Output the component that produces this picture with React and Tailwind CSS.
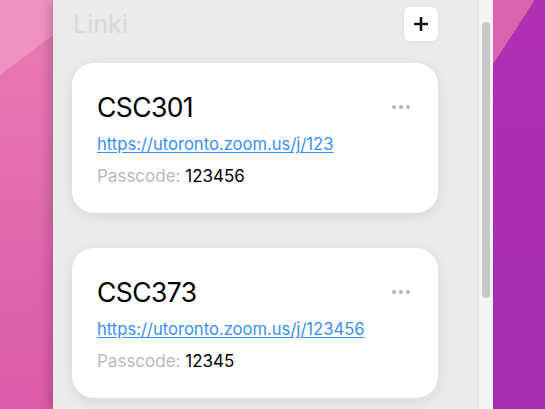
import React from 'react';

const links = [
  { id: 1, name: 'CSC301', url: 'https://utoronto.zoom.us/j/123', passcode: '123456' },
  { id: 2, name: 'CSC373', url: 'https://utoronto.zoom.us/j/123456', passcode: '12345' },
];

const MoreDots = () => (
  <div className="flex items-center gap-[3px] pr-[2px]">
    <span className="h-[4px] w-[4px] rounded-full bg-[#b3b3b3]" />
    <span className="h-[4px] w-[4px] rounded-full bg-[#b3b3b3]" />
    <span className="h-[4px] w-[4px] rounded-full bg-[#b3b3b3]" />
  </div>
);

const LinkCard = ({ link }) => (
  <div className="h-[150px] w-[366px] shrink-0 rounded-[22px] bg-white pl-[25px] pr-[26px] pt-[28px] shadow-[0_3px_14px_rgba(0,0,0,0.09)]">
    <div className="flex items-center justify-between">
      <span className="text-[26.5px] leading-[32px] tracking-[-0.6px] text-black">{link.name}</span>
      <MoreDots />
    </div>
    <a href="#" className="mt-[9px] block text-[16.6px] leading-[24px] text-[#3b8ff0] underline underline-offset-2">
      {link.url}
    </a>
    <div className="mt-[8px] text-[17px] leading-[24px]">
      <span className="text-[#b9b9b9]">Passcode: </span>
      <span className="text-black">{link.passcode}</span>
    </div>
  </div>
);

export default function App() {
  return (
    <div
      className="flex h-[409px] w-[545px] overflow-hidden"
      style={{ fontFamily: 'Inter, "Noto Sans", sans-serif' }}
    >
      {/* desktop wallpaper, left */}
      <div className="w-[53px] shrink-0 bg-[linear-gradient(143deg,#f092c0_60px,transparent_60px),linear-gradient(to_bottom,#e87cb6,#dc5aa8)]" />

      {/* window */}
      <div className="relative z-10 flex w-[425px] shrink-0 flex-col bg-[#ebebeb] pl-[19px] pr-[40px] pt-[7px] shadow-[-4px_0_10px_rgba(0,0,0,0.18)]">
        <div className="flex items-center justify-between">
          <span className="pl-[1px] text-[25px] leading-[30px] text-[#d8d8d8]">Linki</span>
          <button className="flex h-[34px] w-[34px] items-center justify-center rounded-[6px] bg-white shadow-[0_1px_4px_rgba(0,0,0,0.06)]">
            <svg width="14" height="14" viewBox="0 0 14 14">
              <path d="M7 1v12M1 7h12" stroke="#111" strokeWidth="2.6" strokeLinecap="round" />
            </svg>
          </button>
        </div>
        <div className="mt-[22px] flex flex-col gap-[35px]">
          {links.map((l) => (
            <LinkCard key={l.id} link={l} />
          ))}
        </div>
      </div>

      {/* scrollbar */}
      <div className="relative z-10 w-[15px] shrink-0 border-l border-[#e4e4e4] bg-[#f4f4f4] pl-[3px] pt-[22px]">
        <div className="h-[276px] w-[8px] rounded-full bg-[#c7c7c7]" />
      </div>

      {/* desktop wallpaper, right */}
      <div className="flex-1 bg-[linear-gradient(123deg,#d766ae_35px,transparent_35px),linear-gradient(to_bottom,#b030b4,#a42db0)]" />
    </div>
  );
}
